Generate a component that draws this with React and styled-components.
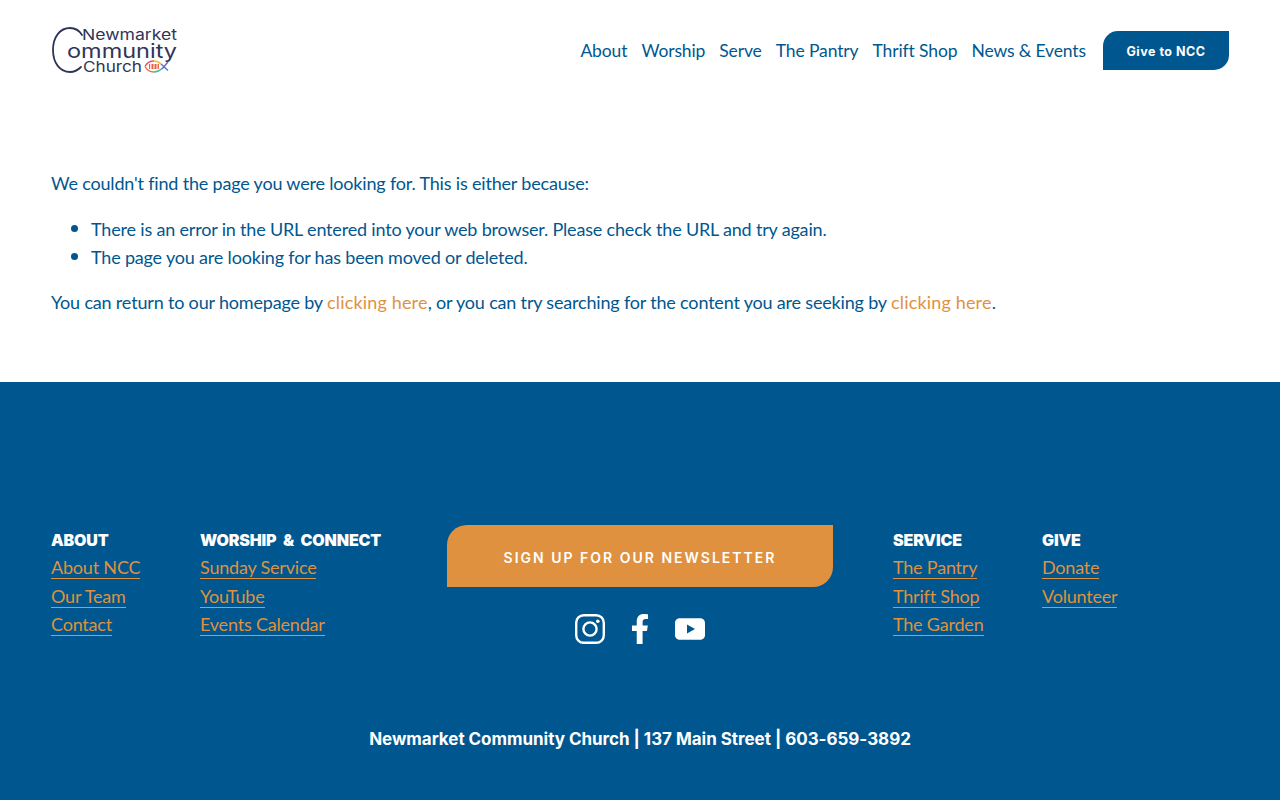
import React from 'react';
import styled, { createGlobalStyle } from 'styled-components';
import { FaFacebookF } from 'react-icons/fa';

const BLUE = '#00578f';
const ORANGE = '#df9140';
const BODY_FONT = 'Lato, "Noto Sans", sans-serif';
const HEAD_FONT = 'Inter, "Liberation Sans", sans-serif';
const INK = '#2f3558';

const GlobalStyle = createGlobalStyle`
  html, body { margin: 0; padding: 0; background: #fff; }
  body { font-family: ${BODY_FONT}; color: ${BLUE}; overflow: hidden; }
`;

const Page = styled.div`
  width: 1280px;
  height: 800px;
  display: flex;
  flex-direction: column;
`;

const Header = styled.header`
  height: 101px;
  padding: 0 51px;
  display: flex;
  align-items: center;
  justify-content: space-between;
`;

const Nav = styled.nav`
  display: flex;
  align-items: center;
`;

const NavLink = styled.a`
  font-size: 17.5px;
  letter-spacing: -0.12px;
  margin-right: 14px;
  white-space: nowrap;
`;

const GiveButton = styled.a`
  width: 126px;
  height: 39px;
  margin-left: 3px;
  padding-top: 2px;
  box-sizing: border-box;
  background: ${BLUE};
  color: #fff;
  border-radius: 15px 0 15px 0;
  display: flex;
  align-items: center;
  justify-content: center;
  font-family: ${HEAD_FONT};
  font-size: 12.5px;
  font-weight: 700;
  letter-spacing: 0.5px;
`;

const Main = styled.main`
  height: 281px;
  padding: 68px 51px 0;
  box-sizing: border-box;
  font-size: 18px;
  letter-spacing: -0.18px;
  line-height: 28px;
`;

const Para = styled.p`
  margin: 0;
`;

const List = styled.ul`
  margin: 18px 0 17px;
  padding: 0 0 0 20px;
  list-style: none;
`;

const Item = styled.li`
  display: flex;
  align-items: center;
  gap: 13px;

  &::before {
    content: '';
    width: 7px;
    height: 7px;
    margin-top: -2px;
    border-radius: 50%;
    background: ${BLUE};
  }
`;

const Orange = styled.a`
  color: ${ORANGE};
  letter-spacing: 0.17px;
`;

const Footer = styled.footer`
  flex: 1;
  background: ${BLUE};
  padding: 143px 51px 0;
  display: flex;
  flex-direction: column;
`;

const Columns = styled.div`
  display: grid;
  grid-template-columns: 149px 247px 446px 149px 1fr;
  height: 203px;
`;

const Column = styled.div`
  display: flex;
  flex-direction: column;
  align-items: flex-start;
  padding-top: 1px;
`;

const ColumnTitle = styled.div`
  font-family: ${HEAD_FONT};
  font-size: 16px;
  font-weight: 900;
  color: #fff;
  line-height: 28px;
  letter-spacing: -0.15px;
  word-spacing: 3.5px;
`;

const FooterLink = styled.a`
  font-size: 18px;
  letter-spacing: -0.2px;
  color: ${ORANGE};
  line-height: 26px;
  height: 24px;
  margin-bottom: 3.5px;
  border-bottom: 1px solid ${ORANGE};
  white-space: nowrap;
`;

const Center = styled.div`
  width: 386px;
  display: flex;
  flex-direction: column;
  align-items: center;
`;

const Newsletter = styled.a`
  width: 100%;
  height: 62px;
  background: ${ORANGE};
  color: #fff;
  border-radius: 20px 0 20px 0;
  display: flex;
  align-items: center;
  justify-content: center;
  font-family: ${HEAD_FONT};
  font-size: 14px;
  font-weight: 600;
  letter-spacing: 2px;
  padding-top: 2px;
  box-sizing: border-box;
`;

const Social = styled.div`
  display: flex;
  align-items: center;
  gap: 20px;
  margin-top: 27px;
  color: #fff;
`;

const Address = styled.div`
  font-family: ${HEAD_FONT};
  font-size: 17px;
  font-weight: 700;
  color: #fff;
  text-align: center;
  letter-spacing: -0.03px;
  line-height: 22px;
`;

const LogoText = styled.text`
  font-family: Inter, sans-serif;
  font-weight: 400;
  fill: ${INK};
`;

const Logo = () => (
  <svg width="130" height="49" viewBox="0 0 130 49" fill="none">
    <path d="M31 9C28 4 23 2 19 2 9 2 2 11 2 24 2 37 9 46 19 46 23 46 27 44 30 41" stroke={INK} strokeWidth="1.8" strokeLinecap="round" />
    <LogoText x="31" y="14" fontSize="15" textLength="95" lengthAdjust="spacingAndGlyphs">Newmarket</LogoText>
    <LogoText x="16" y="32" fontSize="20" textLength="110" lengthAdjust="spacingAndGlyphs">ommunity</LogoText>
    <LogoText x="32" y="46" fontSize="15" textLength="59" lengthAdjust="spacingAndGlyphs">Church</LogoText>
    <path d="M94 40.500C96 36.500 99 35 103 35" stroke="#ee4d77" strokeWidth="1.4" />
    <path d="M94 40.500C96 44.500 99 46 103 46" stroke="#f0703c" strokeWidth="1.4" />
    <path d="M103 35C106 35 108 36 110 38" stroke="#f4bf2e" strokeWidth="1.4" />
    <path d="M103 46C106 46 109 44.500 111 42.500" stroke="#3fc0a0" strokeWidth="1.4" />
    <path d="M110 38L117 44.500M111 43L117 36" stroke="#5f6fc9" strokeWidth="1.4" />
    <path d="M98 38h1.200v5H98zM100.500 38h2v5h-2zM103.500 38h2v5h-2zM106.500 38h1.400v5h-1.400z" fill="#e8603c" />
  </svg>
);

const Instagram = () => (
  <svg width="30" height="30" viewBox="0 0 30 30" fill="none" stroke="#fff">
    <rect x="1.2" y="1.2" width="27.6" height="27.6" rx="7.5" strokeWidth="2.4" />
    <circle cx="15" cy="15" r="6.6" strokeWidth="2.4" />
    <circle cx="22.8" cy="7.2" r="1.8" fill="#fff" stroke="none" />
  </svg>
);

const YouTube = () => (
  <svg width="30" height="30" viewBox="0 0 30 30">
    <path fillRule="evenodd" fill="#fff" d="M5 4.200h20c2.800 0 5 2 5 4.600v12.400c0 2.600-2.200 4.600-5 4.600H5c-2.800 0-5-2-5-4.600V8.800C0 6.200 2.200 4.200 5 4.200zM12 10.500v9l8-4.500z" />
  </svg>
);

const footerColumns = [
  { title: 'ABOUT', links: ['About NCC', 'Our Team', 'Contact'] },
  { title: 'WORSHIP & CONNECT', links: ['Sunday Service', 'YouTube', 'Events Calendar'] },
  null,
  { title: 'SERVICE', links: ['The Pantry', 'Thrift Shop', 'The Garden'] },
  { title: 'GIVE', links: ['Donate', 'Volunteer'] },
];

const navItems = ['About', 'Worship', 'Serve', 'The Pantry', 'Thrift Shop', 'News & Events'];

export default function App() {
  return (
    <Page>
      <GlobalStyle />
      <Header>
        <Logo />
        <Nav>
          {navItems.map((item) => (
            <NavLink key={item}>{item}</NavLink>
          ))}
          <GiveButton>Give to NCC</GiveButton>
        </Nav>
      </Header>
      <Main>
        <Para>We couldn't find the page you were looking for. This is either because:</Para>
        <List>
          <Item>There is an error in the URL entered into your web browser. Please check the URL and try again.</Item>
          <Item>The page you are looking for has been moved or deleted.</Item>
        </List>
        <Para>
          You can return to our homepage by <Orange>clicking here</Orange>, or you can try searching for the content you are seeking by <Orange>clicking here</Orange>.
        </Para>
      </Main>
      <Footer>
        <Columns>
          {footerColumns.map((col, index) =>
            col ? (
              <Column key={col.title}>
                <ColumnTitle>{col.title}</ColumnTitle>
                {col.links.map((link) => (
                  <FooterLink key={link}>{link}</FooterLink>
                ))}
              </Column>
            ) : (
              <Center key={index}>
                <Newsletter>SIGN UP FOR OUR NEWSLETTER</Newsletter>
                <Social>
                  <Instagram />
                  <FaFacebookF size={30} />
                  <YouTube />
                </Social>
              </Center>
            )
          )}
        </Columns>
        <Address>Newmarket Community Church | 137 Main Street | 603-659-3892</Address>
      </Footer>
    </Page>
  );
}
